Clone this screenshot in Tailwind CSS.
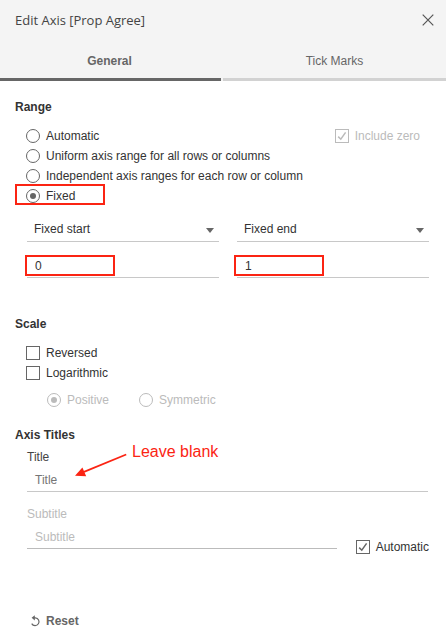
<!DOCTYPE html>
<html lang="en">
<head>
<meta charset="utf-8">
<title>Edit Axis</title>
<script src="https://cdn.jsdelivr.net/npm/@tailwindcss/browser@4"></script>
</head>
<body class="bg-white">
<div class="relative w-[446px] h-[642px] overflow-hidden bg-white font-['Liberation_Sans',Arial,sans-serif] text-[12px] leading-[20px] text-[#333]">
  <header class="bg-[#f4f4f4] h-[81px] flex flex-col">
    <div class="h-[40px] pl-[15px] pr-[12px] flex items-center justify-between">
      <h1 class="font-['Open_Sans',sans-serif] text-[13px] tracking-[-0.01px] text-[#444]">Edit Axis [Prop Agree]</h1>
      <svg class="w-[12px] h-[12px]" viewBox="0 0 12 12" fill="none" stroke="#555" stroke-width="1.2"><path d="M.7 .7 11.3 11.3M11.3 .7 .7 11.3"/></svg>
    </div>
    <nav class="flex-1 flex gap-[2px] text-center text-[#666]">
      <div class="w-[221px] pt-[11px] pr-[2px] font-bold border-b-[3px] border-[#666]">General</div>
      <div class="w-[223px] pt-[11px] border-b-[3px] border-[#d2d2d2]">Tick Marks</div>
    </nav>
  </header>

  <section class="pt-[16px] pl-[15px] pr-[17px]">
    <h2 class="font-bold">Range</h2>
    <div class="mt-[9px] pl-[11px] flex justify-between">
      <div>
        <div class="flex items-center gap-[6px]"><span class="size-[14px] rounded-full border border-[#666]"></span>Automatic</div>
        <div class="flex items-center gap-[6px]"><span class="size-[14px] rounded-full border border-[#666]"></span>Uniform axis range for all rows or columns</div>
        <div class="flex items-center gap-[6px]"><span class="size-[14px] rounded-full border border-[#666]"></span>Independent axis ranges for each row or column</div>
        <div class="relative flex items-center gap-[6px]">
          <span class="size-[14px] rounded-full border border-[#666] flex items-center justify-center"><span class="size-[6px] rounded-full bg-[#666]"></span></span>Fixed
          <span class="absolute -left-[11px] -top-[2px] w-[90px] h-[21px] border-2 border-[#fb2413]"></span>
        </div>
      </div>
      <div class="h-[20px] mr-[9px] flex items-center gap-[6px] text-[#bbb]">
        <svg class="size-[14px]" viewBox="0 0 14 14" fill="none" stroke="#bbb"><rect x=".5" y=".5" width="13" height="13"/><path d="M3.2 7.6 5.8 10.2 10.6 3.4" stroke-width="1.5"/></svg>Include zero
      </div>
    </div>
    <div class="mt-[13px] pl-[12px] flex gap-[18px]">
      <div class="w-[192px]">
        <div class="h-[23px] pl-[7px] pr-[5px] flex justify-between border-b border-[#c8c8c8]">Fixed start
          <svg class="w-[8px] h-[5px] mt-[9px]" viewBox="0 0 8 5" fill="#666"><path d="M0 0H8L4 5Z"/></svg>
        </div>
        <div class="relative mt-[14px] h-[22px] pl-[8px] border-b border-[#c8c8c8]">0
          <span class="absolute -left-[2px] -top-[1px] w-[90px] h-[21px] border-2 border-[#fb2413]"></span>
        </div>
      </div>
      <div class="w-[192px]">
        <div class="h-[23px] pl-[7px] pr-[5px] flex justify-between border-b border-[#c8c8c8]">Fixed end
          <svg class="w-[8px] h-[5px] mt-[9px]" viewBox="0 0 8 5" fill="#666"><path d="M0 0H8L4 5Z"/></svg>
        </div>
        <div class="relative mt-[14px] h-[22px] pl-[8px] border-b border-[#c8c8c8]">1
          <span class="absolute -left-[3px] -top-[1px] w-[90px] h-[21px] border-2 border-[#fb2413]"></span>
        </div>
      </div>
    </div>
  </section>

  <section class="pt-[36px] pl-[15px]">
    <h2 class="font-bold">Scale</h2>
    <div class="mt-[9px] pl-[11px]">
      <div class="flex items-center gap-[6px]"><span class="size-[14px] border border-[#666]"></span>Reversed</div>
      <div class="flex items-center gap-[6px]"><span class="size-[14px] border border-[#666]"></span>Logarithmic</div>
    </div>
    <div class="mt-[7px] pl-[32px] flex text-[#bbb]">
      <div class="w-[92px] flex items-center gap-[6px]"><span class="size-[14px] rounded-full border border-[#bbb] flex items-center justify-center"><span class="size-[6px] rounded-full bg-[#bbb]"></span></span>Positive</div>
      <div class="flex items-center gap-[6px]"><span class="size-[14px] rounded-full border border-[#bbb]"></span>Symmetric</div>
    </div>
  </section>

  <section class="pt-[15px] pl-[15px] pr-[17px]">
    <h2 class="font-bold">Axis Titles</h2>
    <div class="pl-[12px] pt-[2px]">
      <div class="text-[#444]">Title</div>
      <div class="w-[401px] mt-[3px] pl-[8px] h-[22px] border-b border-[#c8c8c8] text-[#757575]">Title</div>
      <div class="mt-[12px] text-[#bbb]">Subtitle</div>
      <div class="mt-[3px] flex">
        <div class="w-[310px] pl-[8px] h-[22px] border-b border-[#bbb] text-[#bbb]">Subtitle</div>
        <div class="ml-[19px] mt-[10px] h-[20px] flex items-center gap-[6px]">
          <svg class="size-[14px]" viewBox="0 0 14 14" fill="none" stroke="#666"><rect x=".5" y=".5" width="13" height="13"/><path d="M3.2 7.6 5.8 10.2 10.6 3.4" stroke-width="1.5"/></svg>Automatic
        </div>
      </div>
    </div>
  </section>

  <footer class="pt-[54px] pl-[30px] flex items-center gap-[4px] font-bold text-[#666]">
    <svg class="size-[12px]" viewBox="0 0 12 12" fill="none" stroke="#666" stroke-width="1.2"><path d="M3 2.8H5.4A3.9 3.9 0 1 1 1.7 8.6"/><path d="M4.8 .2 1.6 2.8 4.8 5.4Z" fill="#666" stroke="none"/></svg>
    <span>Reset</span>
  </footer>

  <div class="absolute left-[74px] top-[441px] flex text-[#fb2413]">
    <svg class="w-[58px] h-[40px]" viewBox="0 0 58 40"><path d="M52.2 13.5 10 30.9" stroke="#fb2413" stroke-width="1.7"/><path d="M1 34.8 8.4 26.4 12.2 35.2Z" fill="#fb2413"/></svg>
    <span class="pt-[1px] text-[16px]">Leave blank</span>
  </div>
</div>
</body>
</html>
